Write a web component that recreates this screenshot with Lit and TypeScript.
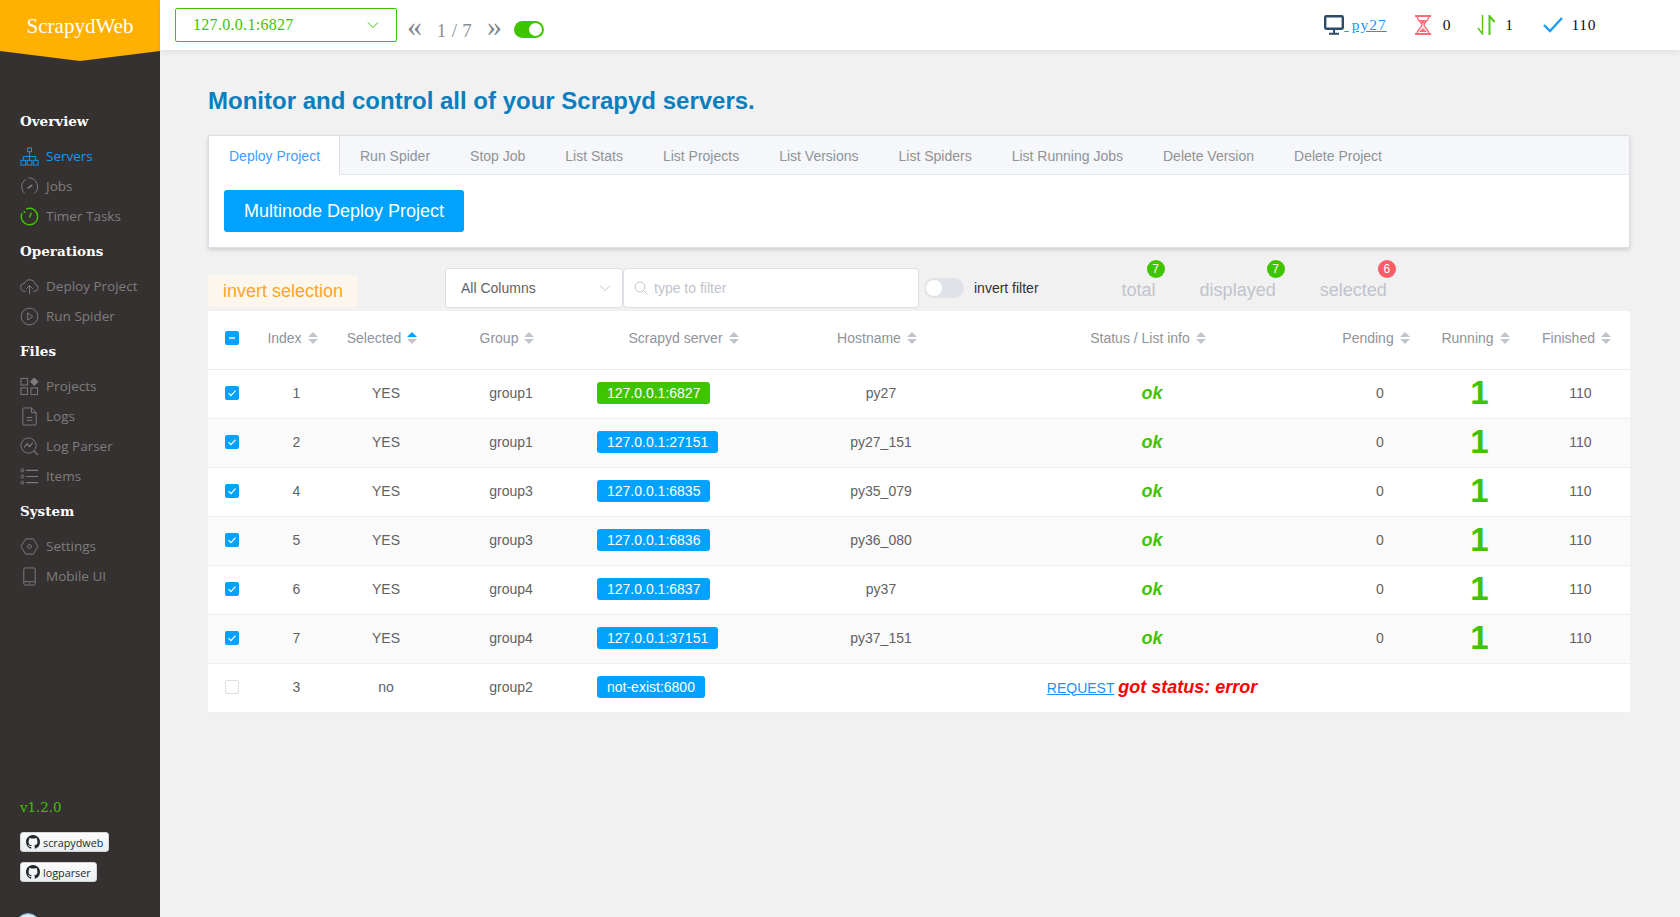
import { LitElement, html, css, svg } from "lit";
import { customElement } from "lit/decorators.js";

const I = (body: unknown, cls = "ic") =>
  html`<svg class=${cls} viewBox="0 0 20 20" fill="none" stroke="currentColor" stroke-width="1">${body}</svg>`;

const icons: Record<string, unknown> = {
  servers: I(svg`<rect x="8" y="1" width="4" height="4"/><path d="M10 5v9M3.5 14v-4h13v4"/><rect x="1" y="14" width="5" height="5"/><rect x="7.5" y="14" width="5" height="5"/><rect x="14" y="14" width="5" height="5"/>`),
  jobs: I(svg`<path d="M5 17.2a9 9 0 0 1 1-14.6M9 1.1a9 9 0 0 1 6 16.1"/><path d="M8 12l5-3.5" stroke-width="1.8"/>`),
  timer: I(svg`<path d="M6.5 2.2A8.6 8.6 0 1 1 2.2 6.4" stroke-width="1.5"/><path d="M4 4.5l1.5 1.5M10 11l2-5" stroke-width="1.5"/>`, "ic green"),
  deploy: I(svg`<path d="M6 15H5a4 4 0 0 1-.6-8A6 6 0 0 1 16 8a3.5 3.5 0 0 1-.8 7H14"/><path d="M10 18V9M6.5 12.5 10 9l3.5 3.5"/>`),
  run: I(svg`<circle cx="10" cy="10" r="8.8"/><path d="M8 6.2v7.6l5.5-3.8z"/>`),
  projects: I(svg`<rect x="1" y="1.5" width="7" height="7"/><path d="M15 1l4 4-4 4-4-4z" fill="currentColor"/><rect x="1" y="11.5" width="7" height="7"/><rect x="11.5" y="11.5" width="7" height="7"/>`),
  logs: I(svg`<path d="M4 1h8l5 5v12a1 1 0 0 1-1 1H4a1 1 0 0 1-1-1V2a1 1 0 0 1 1-1zM12 1v5h5M7 11h6M7 14h6"/>`),
  parser: I(svg`<circle cx="9" cy="9" r="8"/><path d="M15 15l4 4M4.5 11l3-4 2.5 3 3.5-4" stroke-width="1.2"/>`),
  items: I(svg`<circle cx="2.5" cy="3.5" r="1.5"/><circle cx="2.5" cy="10" r="1.5"/><circle cx="2.5" cy="16.5" r="1.5"/><path d="M6.5 3.5H19M6.5 10H19M6.5 16.5H19" stroke-width="1.2"/>`),
  settings: I(svg`<path d="M6 2h8l5 8-5 8H6l-5-8z" stroke-linejoin="round"/><circle cx="10" cy="10" r="2"/>`),
  mobile: I(svg`<rect x="4" y="1" width="12" height="18" rx="1.5"/><path d="M4 15.5h12M9.5 17.3h1"/>`),
};

const nav = [
  { h: "Overview", items: [["servers", "Servers"], ["jobs", "Jobs"], ["timer", "Timer Tasks"]] },
  { h: "Operations", items: [["deploy", "Deploy Project"], ["run", "Run Spider"]] },
  { h: "Files", items: [["projects", "Projects"], ["logs", "Logs"], ["parser", "Log Parser"], ["items", "Items"]] },
  { h: "System", items: [["settings", "Settings"], ["mobile", "Mobile UI"]] },
];

const tabs = ["Deploy Project", "Run Spider", "Stop Job", "List Stats", "List Projects", "List Versions", "List Spiders", "List Running Jobs", "Delete Version", "Delete Project"];

const columns = ["Index", "Selected", "Group", "Scrapyd server", "Hostname", "Status / List info", "Pending", "Running", "Finished"];

const rows = [
  [1, "group1", "127.0.0.1:6827", "py27", true],
  [2, "group1", "127.0.0.1:27151", "py27_151", false],
  [4, "group3", "127.0.0.1:6835", "py35_079", false],
  [5, "group3", "127.0.0.1:6836", "py36_080", false],
  [6, "group4", "127.0.0.1:6837", "py37", false],
  [7, "group4", "127.0.0.1:37151", "py37_151", false],
] as const;

const GH = html`<svg class="gh" viewBox="0 0 16 16"><path fill="#24292e" d="M8 0C3.58 0 0 3.58 0 8c0 3.54 2.29 6.53 5.47 7.59.4.07.55-.17.55-.38 0-.19-.01-.82-.01-1.49-2.01.37-2.53-.49-2.69-.94-.09-.23-.48-.94-.82-1.13-.28-.15-.68-.52-.01-.53.63-.01 1.08.58 1.23.82.72 1.21 1.87.87 2.33.66.07-.52.28-.87.51-1.07-1.78-.2-3.64-.89-3.64-3.95 0-.87.31-1.59.82-2.15-.08-.2-.36-1.02.08-2.12 0 0 .67-.21 2.2.82.64-.18 1.32-.27 2-.27.68 0 1.36.09 2 .27 1.53-1.04 2.2-.82 2.2-.82.44 1.1.16 1.92.08 2.12.51.56.82 1.27.82 2.15 0 3.07-1.87 3.75-3.65 3.95.29.25.54.73.54 1.48 0 1.07-.01 1.93-.01 2.2 0 .21.15.46.55.38A8.013 8.013 0 0016 8c0-4.42-3.58-8-8-8z"/></svg>`;

const chevron = html`<svg class="chev" viewBox="0 0 12 8" fill="none" stroke="currentColor" stroke-width="1"><path d="M1 1.5l5 5 5-5"/></svg>`;

@customElement("app-root")
export class AppRoot extends LitElement {
  static styles = css`
    :host { display: block; height: 917px; overflow: hidden; background: #f1f1f1; font-family: "Liberation Sans", Arial, sans-serif; }
    * { box-sizing: border-box; }
    .layout { display: flex; height: 917px; }
    .side { width: 160px; flex: none; background: #353131; display: flex; flex-direction: column; overflow: hidden; }
    .logo { height: 61px; flex: none; background: #ffb000; color: #fff; text-align: center; font: 21px/52px "Liberation Serif", serif; clip-path: polygon(0 0, 100% 0, 100% 51px, 50% 61px, 0 51px); }
    .nav { padding: 40px 0 0 20px; }
    .nav h4 { margin: 0; height: 40px; color: #fff; font: bold 13.5px/40px "DejaVu Serif", serif; }
    .item { height: 30px; display: flex; align-items: center; gap: 7px; color: #7d7d7d; font: 13.5px "Open Sans", sans-serif; }
    .item.on { color: #0a9bff; }
    .ic { width: 19px; height: 19px; flex: none; }
    .green { color: #3fc400; }
    .foot { margin-top: auto; padding-left: 20px; position: relative; height: 124px; flex: none; }
    .ver { color: #3fc400; font: 13.3px/20px "DejaVu Serif", serif; margin: 5px 0 14px; height: 20px; }
    .gb { display: flex; width: max-content; height: 20px; align-items: center; gap: 3px; padding: 0 5px; border-radius: 3px; background: linear-gradient(#fcfcfc, #e9eef3); border: 1px solid #d5d5d5; color: #24292e; font: 10.8px "Open Sans", sans-serif; margin-bottom: 10px; }
    .gh { width: 14px; height: 14px; }
    .avatar { position: absolute; left: 15px; top: 120px; width: 26px; height: 26px; border-radius: 50%; background: #dfe9f3; border: 1px solid #6f9ab8; }
    .right { flex: 1; min-width: 0; }
    header { height: 50px; background: #fff; box-shadow: 0 2px 6px rgba(0,0,0,.08); display: flex; padding-left: 15px; align-items: flex-start; position: relative; }
    .srv { margin-top: 8px; width: 222px; height: 34px; border: 1px solid #3fc400; border-radius: 2px; color: #3fc400; display: flex; align-items: center; justify-content: space-between; padding: 0 17px 0 17px; font: 16px "Liberation Serif", serif; letter-spacing: .3px; }
    .chev { width: 12px; height: 8px; }
    .pager { display: flex; align-items: center; margin-left: 10px; margin-top: 18px; height: 24px; color: #8b8f96; font: 19px "Liberation Serif", serif; letter-spacing: .3px; }
    .arr { font-size: 30px; line-height: 20px; margin-top: -8px; color: #7f8690; width: 15px; }
    .pg { width: 65px; text-align: center; margin-top: 2px; }
    .sw { width: 30px; height: 17px; border-radius: 9px; background: #3fc400; margin: 21px 0 0 12px; padding: 2px 2px; display: flex; justify-content: flex-end; }
    .sw i { width: 13px; height: 13px; border-radius: 50%; background: #fff; }
    .stats { margin-left: auto; padding-right: 84px; display: flex; align-items: center; height: 50px; font: 15.5px "Liberation Serif", serif; letter-spacing: .6px; color: #111; }
    .stats svg { flex: none; }
    .stats a { color: #1e90ff; text-decoration: underline; }
    .stats a.host { margin: 0 28px 0 3px; letter-spacing: 1px; }
    .st { display: flex; align-items: center; gap: 10px; margin-right: 29px; }
    .st.hg { margin-right: 26px; gap: 12px; }
    .st:last-child { margin-right: 0; gap: 9px; }
    main { padding: 0 50px 0 48px; }
    h1 { margin: 31px 0 14px; font: bold 24px/40px "Liberation Sans", sans-serif; color: #0a7fbe; }
    .card { height: 113px; background: #fff; border: 1px solid #dcdfe6; box-shadow: 0 2px 4px rgba(0,0,0,.14); }
    .tabs { display: flex; height: 39px; background: #f5f7fa; border-bottom: 1px solid #e4e7ed; font-size: 14px; color: #909399; }
    .tab { padding: 0 20px; line-height: 40px; height: 39px; white-space: nowrap; flex: none; }
    .tab.on { background: #fff; color: #409eff; border-right: 1px solid #dcdfe6; width: 131px; }
    .btn { margin: 15px 0 0 15px; width: 240px; height: 42px; border-radius: 3px; background: #00a2ff; color: #fff; font-size: 18px; line-height: 42px; text-align: center; }
    .tool { height: 63px; display: flex; align-items: flex-start; }
    .inv { width: 150px; height: 32px; margin-top: 27px; background: #fdf6ec; border-radius: 3px; color: #ffa51e; font-size: 18px; line-height: 32px; text-align: center; }
    .sel, .inp { height: 40px; margin-top: 20px; background: #fff; border: 1px solid #dcdfe6; border-radius: 4px; font-size: 14px; display: flex; align-items: center; }
    .sel { width: 178px; margin-left: 87px; padding: 0 11px 0 15px; justify-content: space-between; color: #606266; }
    .sel .chev { color: #c0c4cc; }
    .inp { width: 296px; padding-left: 10px; gap: 6px; color: #c0c4cc; }
    .mag { width: 14px; height: 14px; }
    .fsw { width: 40px; height: 20px; margin: 30px 0 0 5px; border-radius: 10px; background: #dfe2e6; padding: 2px; }
    .fsw i { display: block; width: 16px; height: 16px; border-radius: 50%; background: #fff; }
    .flbl { margin: 30px 0 0 10px; font-size: 14px; line-height: 20px; color: #303133; }
    .cnt { position: relative; margin-top: 30px; font-size: 18px; line-height: 24px; color: #c0c4cc; margin-left: 44px; }
    .cnt.first { margin-left: 83px; }
    .cnt b { position: absolute; top: -18px; right: -9px; width: 18px; height: 18px; border-radius: 50%; background: #3fc400; color: #fff; font: 12px/18px "Liberation Sans", sans-serif; text-align: center; }
    .cnt b.red { background: #fb5c6a; }
    .row { display: grid; grid-template-columns: 50px 77px 102px 148px 197px 198px 344px 112px 87px 107px; height: 49px; padding-bottom: 2px; background: #fff; border-bottom: 1px solid #ebeef5; align-items: center; font-size: 14px; color: #606266; text-align: center; }
    .row.alt { background: #fafafa; }
    .row.head { height: 59px; padding-bottom: 4px; color: #909399; }
    .cb { display: block; width: 14px; height: 14px; margin-left: 17px; border-radius: 2px; background: #00a2ff; }
    .cb svg { display: block; width: 14px; height: 14px; }
    .cb.off { background: #fff; border: 1px solid #dcdfe6; }
    .hc { display: flex; align-items: center; justify-content: center; gap: 6px; padding-right: 8px; }
    .hc.flat { padding-right: 0; }
    .sort { display: flex; flex-direction: column; gap: 2px; }
    .sort i { display: block; width: 0; height: 0; border-left: 5px solid transparent; border-right: 5px solid transparent; }
    .sort i:first-child { border-bottom: 5px solid #c0c4cc; }
    .sort i:last-child { border-top: 5px solid #c0c4cc; }
    .sort.on i:first-child { border-bottom-color: #00a2ff; }
    .tagc { text-align: left; padding-left: 12px; }
    .tag { display: inline-block; height: 22px; padding: 0 10px; border-radius: 3px; background: #00a2ff; color: #fff; line-height: 22px; }
    .tag.g { background: #3fc400; }
    .ok { color: #3fc400; font: italic bold 18px "Liberation Sans", sans-serif; }
    .one { color: #3fc400; font: bold 33px/33px "Liberation Sans", sans-serif; padding-bottom: 1px; }
    .fin { padding-left: 8px; }
    .errc { grid-column: 7; white-space: nowrap; }
    .errc a { color: #1e90ff; text-decoration: underline; }
    .errc b { color: #f00; font: italic bold 18px "Liberation Sans", sans-serif; }
  `;

  private check(on: boolean) {
    return on
      ? html`<span class="cb"><svg viewBox="0 0 14 14" fill="none" stroke="#fff" stroke-width="1.2"><path d="M3.5 7.2l2.4 2.4 4.6-5"/></svg></span>`
      : html`<span class="cb off"></span>`;
  }

  render() {
    return html`<div class="layout">
      <aside class="side">
        <div class="logo">ScrapydWeb</div>
        <nav class="nav">
          ${nav.map((s) => html`<h4>${s.h}</h4>${s.items.map(([k, t]) => html`<div class="item ${k === "servers" ? "on" : ""}">${icons[k]}<span>${t}</span></div>`)}`)}
        </nav>
        <div class="foot">
          <div class="ver">v1.2.0</div>
          <div class="gb">${GH}<span>scrapydweb</span></div>
          <div class="gb">${GH}<span>logparser</span></div>
          <div class="avatar"></div>
        </div>
      </aside>
      <div class="right">
        <header>
          <div class="srv"><span>127.0.0.1:6827</span>${chevron}</div>
          <div class="pager"><span class="arr">«</span><span class="pg">1 / 7</span><span class="arr">»</span></div>
          <div class="sw"><i></i></div>
          <div class="stats">
            <svg width="20" height="20" viewBox="0 0 20 20" fill="none" stroke="#2c4a66" stroke-width="2.4"><rect x="1.2" y="1.2" width="17.6" height="12.6" rx="1.2"/><path d="M10 14v4M5 18.8h10" stroke-width="2"/></svg>
            <a href="#">&nbsp;</a><a class="host" href="#">py27</a>
            <div class="st hg"><svg width="16" height="20" viewBox="0 0 16 20" fill="none" stroke="#ff6b78" stroke-width="1.5"><path d="M0 1h16M0 19h16" stroke-width="2"/><path d="M2 1c0 5 5 6 5 9s-5 4-5 9M14 1c0 5-5 6-5 9s5 4 5 9"/><path d="M4 5h8l-4 4zM4 17l4-4 4 4z" fill="#ff6b78" stroke="none"/></svg><span>0</span></div>
            <div class="st"><svg width="18" height="20" viewBox="0 0 18 20" fill="none" stroke="#52c41a"><path d="M5.5 0v19L1 13" stroke-width="1.4"/><path d="M12.5 20V1l5 6" stroke-width="2"/></svg><span>1</span></div>
            <div class="st"><svg width="20" height="16" viewBox="0 0 20 16" fill="none" stroke="#1e9bf0" stroke-width="2.4"><path d="M1 8l6 6L19 1"/></svg><span>110</span></div>
          </div>
        </header>
        <main>
          <h1>Monitor and control all of your Scrapyd servers.</h1>
          <section class="card">
            <div class="tabs">${tabs.map((t, i) => html`<div class="tab ${i === 0 ? "on" : ""}">${t}</div>`)}</div>
            <div class="btn">Multinode Deploy Project</div>
          </section>
          <div class="tool">
            <div class="inv">invert selection</div>
            <div class="sel"><span>All Columns</span>${chevron}</div>
            <div class="inp"><svg class="mag" viewBox="0 0 14 14" fill="none" stroke="currentColor"><circle cx="6" cy="6" r="5"/><path d="M9.7 9.7L13.5 13.5"/></svg><span>type to filter</span></div>
            <div class="fsw"><i></i></div>
            <div class="flbl">invert filter</div>
            <div class="cnt first">total<b>7</b></div>
            <div class="cnt">displayed<b>7</b></div>
            <div class="cnt">selected<b class="red">6</b></div>
          </div>
          <div class="row head">
            <span class="cb"><svg viewBox="0 0 14 14" stroke="#fff" stroke-width="1.4"><path d="M4 7h6"/></svg></span>
            ${columns.map((c) => html`<div class="hc ${c === "Scrapyd server" || c === "Finished" ? "flat" : ""}"><span>${c}</span><span class="sort ${c === "Selected" ? "on" : ""}"><i></i><i></i></span></div>`)}
          </div>
          ${rows.map(([idx, g, s, h, first], i) => html`<div class="row ${i % 2 ? "alt" : ""}">
            ${this.check(true)}
            <div>${idx}</div><div>YES</div><div>${g}</div>
            <div class="tagc"><span class="tag ${first ? "g" : ""}">${s}</span></div>
            <div>${h}</div><div class="ok">ok</div><div>0</div><div class="one">1</div><div class="fin">110</div>
          </div>`)}
          <div class="row">
            ${this.check(false)}
            <div>3</div><div>no</div><div>group2</div>
            <div class="tagc"><span class="tag">not-exist:6800</span></div>
            <div class="errc"><a href="#">REQUEST</a> <b>got status: error</b></div>
          </div>
        </main>
      </div>
    </div>`;
  }
}
